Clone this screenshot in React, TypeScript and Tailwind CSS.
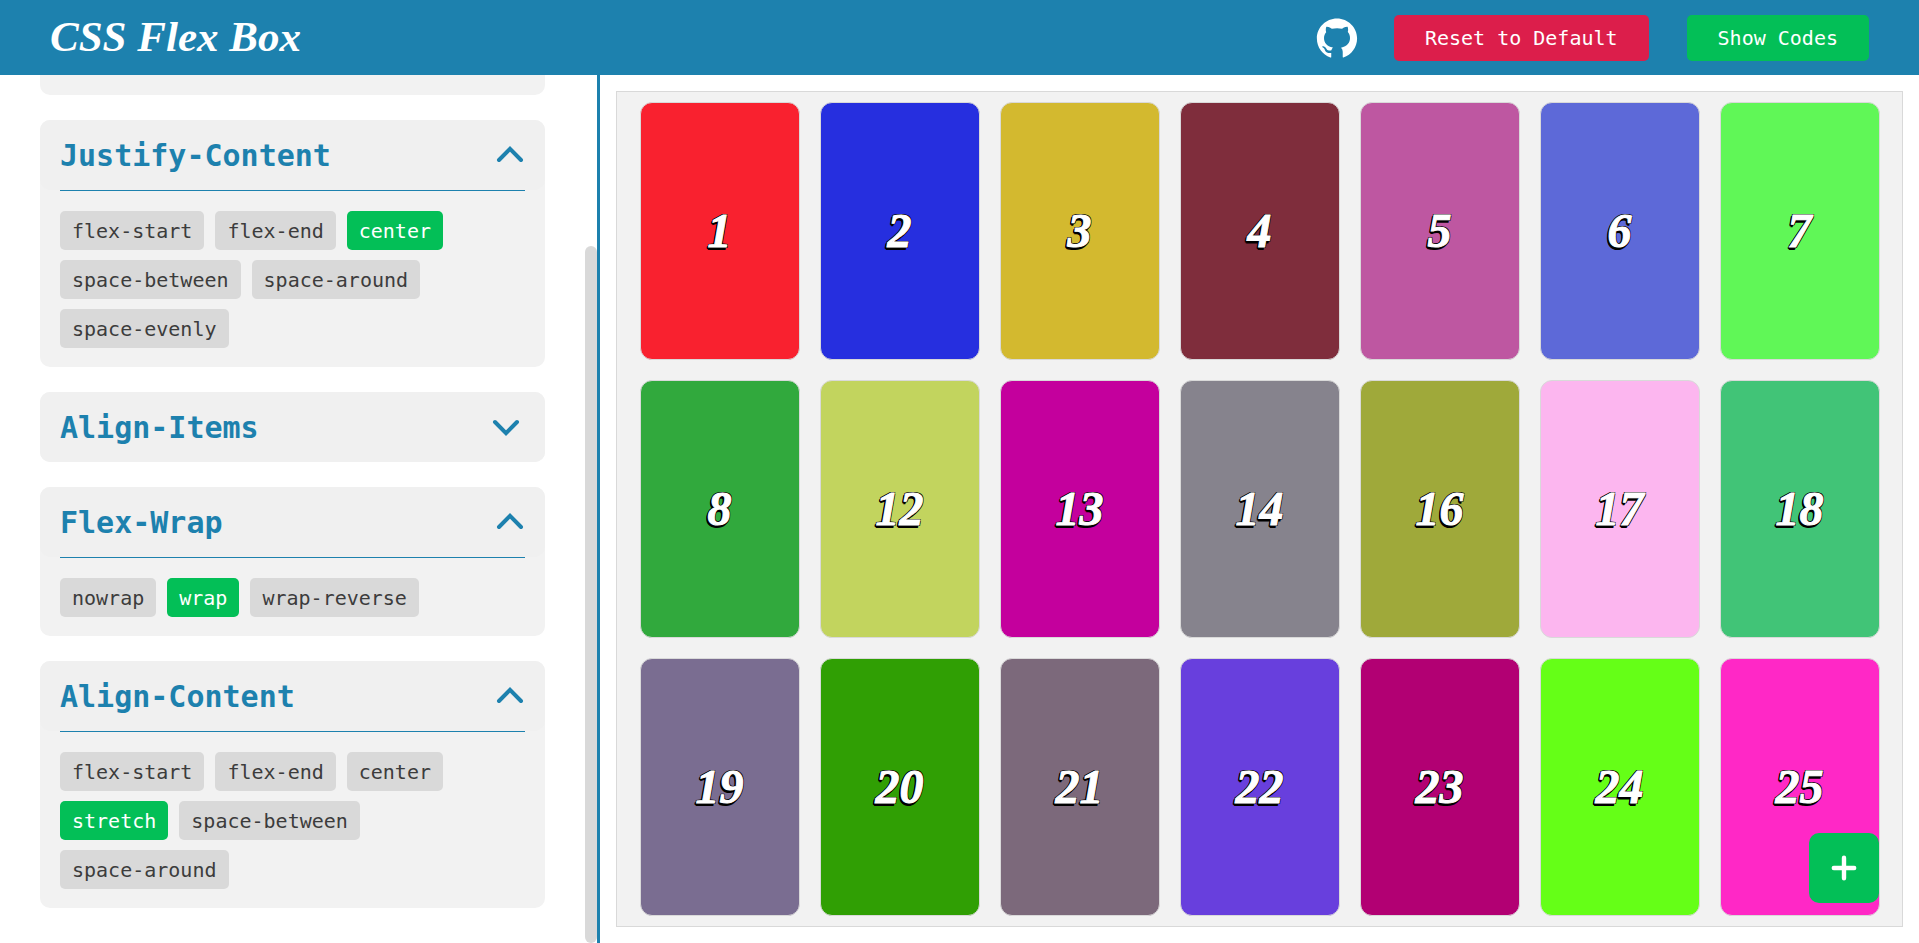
import { useState } from "react";
import { AiFillGithub } from "react-icons/ai";

type Group = { title: string; options: string[]; selected: string; open: boolean };

const groups: Group[] = [
  {
    title: "Justify-Content",
    options: ["flex-start", "flex-end", "center", "space-between", "space-around", "space-evenly"],
    selected: "center",
    open: true,
  },
  { title: "Align-Items", options: ["flex-start", "flex-end", "center", "stretch", "baseline"], selected: "stretch", open: false },
  { title: "Flex-Wrap", options: ["nowrap", "wrap", "wrap-reverse"], selected: "wrap", open: true },
  {
    title: "Align-Content",
    options: ["flex-start", "flex-end", "center", "stretch", "space-between", "space-around"],
    selected: "stretch",
    open: true,
  },
];

const boxes = [
  { id: 1, color: "bg-[#f9212f]" },
  { id: 2, color: "bg-[#262fdf]" },
  { id: 3, color: "bg-[#d3b92f]" },
  { id: 4, color: "bg-[#7f2d3c]" },
  { id: 5, color: "bg-[#be57a1]" },
  { id: 6, color: "bg-[#5d69d8]" },
  { id: 7, color: "bg-[#60f757]" },
  { id: 8, color: "bg-[#31a93d]" },
  { id: 12, color: "bg-[#c2d45e]" },
  { id: 13, color: "bg-[#c4009d]" },
  { id: 14, color: "bg-[#86838d]" },
  { id: 16, color: "bg-[#9fa93a]" },
  { id: 17, color: "bg-[#fcb6ef]" },
  { id: 18, color: "bg-[#41c477]" },
  { id: 19, color: "bg-[#7a6d91]" },
  { id: 20, color: "bg-[#309f04]" },
  { id: 21, color: "bg-[#7c697b]" },
  { id: 22, color: "bg-[#683fdd]" },
  { id: 23, color: "bg-[#b20073]" },
  { id: 24, color: "bg-[#65ff17]" },
  { id: 25, color: "bg-[#ff28c6]" },
];

function Chevron({ open }: { open: boolean }) {
  return (
    <svg
      viewBox="0 0 30 18"
      className={open ? "h-[18px] w-[30px]" : "mr-1 h-[18px] w-[30px] rotate-180"}
      fill="none"
      stroke="currentColor"
      strokeWidth="4"
      strokeLinecap="round"
      aria-hidden="true"
    >
      <path d="M4 14 15 2.9 26 14" />
    </svg>
  );
}

function OptionGroup({ group }: { group: Group }) {
  const [open, setOpen] = useState(group.open);
  const [selected, setSelected] = useState(group.selected);
  return (
    <section className="rounded-[10px] bg-[#f2f2f2]">
      <h2>
        <button
          type="button"
          aria-expanded={open}
          onClick={() => setOpen(!open)}
          className="flex h-[70px] w-full items-center justify-between rounded-[10px] bg-[#f0f0f0] px-5 text-[30px] font-bold text-[#1d81ae]"
        >
          {group.title}
          <Chevron open={open} />
        </button>
      </h2>
      {open && (
        <div className="mx-5 flex flex-wrap gap-x-[11px] gap-y-[10px] border-t border-[#1d81ae] pt-5 pb-[19px]">
          {group.options.map((option) => (
            <button
              key={option}
              type="button"
              aria-pressed={option === selected}
              onClick={() => setSelected(option)}
              className={
                option === selected
                  ? "h-[39px] rounded-[5px] bg-[#03bf57] px-3 text-xl text-white"
                  : "h-[39px] rounded-[5px] bg-[#d9d9d9] px-3 text-xl text-[#3c3c3c]"
              }
            >
              {option}
            </button>
          ))}
        </div>
      )}
    </section>
  );
}

export default function App() {
  return (
    <div className="flex h-screen flex-col overflow-hidden bg-white font-['DejaVu_Sans_Mono',monospace]">
      <header className="flex h-[75px] shrink-0 items-center justify-between bg-[#1d81ae] px-[50px] text-white">
        <h1 className="font-['Liberation_Serif',serif] text-[43px] font-bold italic">CSS Flex Box</h1>
        <div className="flex items-center gap-[38px]">
          <a href="#github" aria-label="GitHub" className="-mr-1">
            <AiFillGithub className="size-[46px]" />
          </a>
          <button type="button" className="h-[46px] rounded-[5px] bg-[#dc1e4b] px-[31px] text-xl">
            Reset to Default
          </button>
          <button type="button" className="h-[46px] rounded-[5px] bg-[#03bf57] px-[31px] text-xl">
            Show Codes
          </button>
        </div>
      </header>
      <div className="flex min-h-0 flex-1">
        <aside className="flex w-[600px] shrink-0 border-r-[3px] border-[#1d81ae]">
          <div className="flex min-w-0 flex-1 flex-col gap-[25px] overflow-hidden px-10">
            <div className="h-5 shrink-0 rounded-b-[10px] bg-[#f2f2f2]" />
            {groups.map((group) => (
              <OptionGroup key={group.title} group={group} />
            ))}
          </div>
          <div className="flex w-3 flex-col pt-[171px]">
            <div className="flex-1 rounded-full bg-[#d9d9d9]" />
          </div>
        </aside>
        <main className="flex min-w-0 flex-1 p-4">
          <div className="flex flex-1 flex-wrap content-stretch justify-center border border-[#d9d9d9] bg-[#f2f2f2]">
            {boxes.map((box) => (
              <div
                key={box.id}
                className={`m-[10px] flex w-40 items-center justify-center rounded-[12px] border border-[#d9d9d9] font-['Liberation_Serif',serif] text-5xl font-bold text-white italic [-webkit-text-stroke:1px_#fff] [text-shadow:-1px_-1px_0_#000,1px_-1px_0_#000,1px_1px_0_#000,-2px_1px_0_#000,-2px_2px_0_#000,-1px_3px_0_#000] ${box.color}`}
              >
                {box.id}
              </div>
            ))}
          </div>
        </main>
      </div>
      <button
        type="button"
        aria-label="Add box"
        className="fixed right-10 bottom-10 flex size-[70px] items-center justify-center rounded-[10px] bg-[#03bf57] text-white"
      >
        <svg viewBox="0 0 26 26" className="size-[26px]" stroke="currentColor" strokeWidth="4.4" strokeLinecap="round" aria-hidden="true">
          <path d="M13 2.8V23.2M2.8 13H23.2" />
        </svg>
      </button>
    </div>
  );
}
